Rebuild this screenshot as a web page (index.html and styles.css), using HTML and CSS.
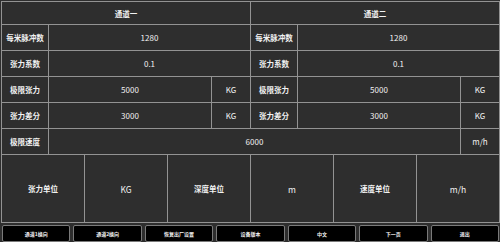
FILE: index.html
```html
<!DOCTYPE html>
<html lang="zh">
<head>
<meta charset="utf-8">
<link rel="stylesheet" href="styles.css">
</head>
<body>
<div class="screen">
  <div class="panel">
    <div class="params">
      <div class="cell head span3">通道一</div>
      <div class="cell head span3">通道二</div>

      <div class="cell label">每米脉冲数</div>
      <div class="cell value span2">1280</div>
      <div class="cell label">每米脉冲数</div>
      <div class="cell value span2">1280</div>

      <div class="cell label">张力系数</div>
      <div class="cell value span2">0.1</div>
      <div class="cell label">张力系数</div>
      <div class="cell value span2">0.1</div>

      <div class="cell label">极限张力</div>
      <div class="cell value">5000</div>
      <div class="cell unit">KG</div>
      <div class="cell label">极限张力</div>
      <div class="cell value">5000</div>
      <div class="cell unit">KG</div>

      <div class="cell label">张力差分</div>
      <div class="cell value">3000</div>
      <div class="cell unit">KG</div>
      <div class="cell label">张力差分</div>
      <div class="cell value">3000</div>
      <div class="cell unit">KG</div>

      <div class="cell label">极限速度</div>
      <div class="cell value span4">6000</div>
      <div class="cell unit">m/h</div>
    </div>
    <div class="units">
      <div class="cell big">张力单位</div>
      <div class="cell big latin">KG</div>
      <div class="cell big">深度单位</div>
      <div class="cell big latin">m</div>
      <div class="cell big">速度单位</div>
      <div class="cell big latin">m/h</div>
    </div>
  </div>
  <div class="buttons">
    <button class="btn">通道1换向</button>
    <button class="btn">通道2换向</button>
    <button class="btn">恢复出厂设置</button>
    <button class="btn">设备版本</button>
    <button class="btn">中文</button>
    <button class="btn">下一页</button>
    <button class="btn">退出</button>
  </div>
</div>
</body>
</html>
```
FILE: styles.css
```css
* { box-sizing: border-box; }
html, body {
  margin: 0;
  padding: 0;
  background: #2e2e2e;
}
body {
  width: 500px;
  height: 242px;
  overflow: hidden;
  font-family: "Noto Sans CJK SC", "Noto Sans", sans-serif;
  color: #f2f2f2;
}
.screen {
  padding: 1px 0 0 1px;
}
.panel {
  width: 499px;
  background: #939393;
  padding: 1px;
  display: flex;
  flex-direction: column;
  gap: 1px;
}
.params {
  display: grid;
  grid-template-columns: 46px 162px 38px 46px 162px 38px;
  grid-template-rows: 22px repeat(5, 25px);
  gap: 1px;
}
.units {
  display: grid;
  grid-template-columns: repeat(6, 1fr);
  grid-template-rows: 67px;
  gap: 1px;
}
.cell {
  background: #2e2e2e;
  display: flex;
  align-items: center;
  justify-content: center;
  font-size: 7.5px;
  font-weight: bold;
  white-space: nowrap;
}
.value, .unit { font-size: 8px; font-weight: normal; }
.span2 { grid-column: span 2; }
.span3 { grid-column: span 3; }
.span4 { grid-column: span 4; }
.big { font-size: 7.5px; font-weight: bold; }
.big.latin { font-size: 8.5px; font-weight: normal; }
.buttons {
  display: grid;
  grid-template-columns: repeat(7, 1fr);
  gap: 3px;
  padding: 2px 1px 0 1px;
}
.btn {
  height: 17px;
  margin: 0;
  padding: 0;
  background: #000;
  border: 1px solid #7a7a7a;
  border-radius: 2px;
  color: #f2f2f2;
  font-family: "Noto Sans CJK SC", sans-serif;
  font-size: 5px;
  font-weight: bold;
}
```
